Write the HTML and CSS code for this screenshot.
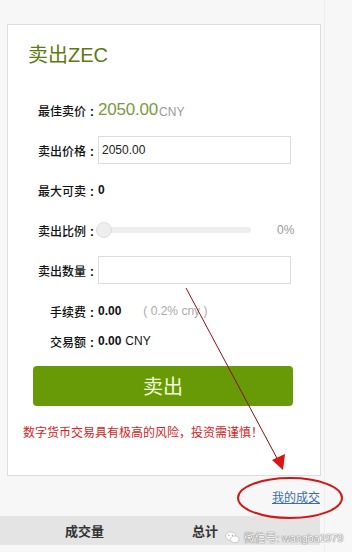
FILE: index.html
```html
<!DOCTYPE html>
<html lang="zh">
<head>
<meta charset="utf-8">
<link rel="stylesheet" href="styles.css">
</head>
<body>
<div class="page">
  <div class="card">
    <h2 class="title">卖出ZEC</h2>
    <div class="form">
      <div class="row"><span class="label">最佳卖价<span class="c">:</span></span><span class="price">2050.00</span><span class="unit">CNY</span></div>
      <div class="row"><span class="label">卖出价格<span class="c">:</span></span><div class="input">2050.00</div></div>
      <div class="row"><span class="label">最大可卖<span class="c">:</span></span><b class="num">0</b></div>
      <div class="row"><span class="label">卖出比例<span class="c">:</span></span><div class="slider"><span class="track"></span><span class="knob"></span></div><span class="pct">0%</span></div>
      <div class="row"><span class="label">卖出数量<span class="c">:</span></span><div class="input"></div></div>
      <div class="row tight"><span class="label">手续费<span class="c">:</span></span><b class="num">0.00</b><span class="note">( 0.2% cny )</span></div>
      <div class="row tight"><span class="label">交易额<span class="c">:</span></span><b class="num">0.00</b><span class="cny">CNY</span></div>
    </div>
    <button class="btn">卖出</button>
    <p class="warn">数字货币交易具有极高的风险，投资需谨慎！</p>
  </div>
  <div class="linkrow"><a class="mylink" href="#">我的成交</a></div>
  <div class="thead"><span class="th th1">成交量</span><span class="th th2">总计</span></div>
  <div class="divider"></div>
  <svg class="annot" width="352" height="552" viewBox="0 0 352 552">
    <line x1="186" y1="288" x2="279" y2="462" stroke="#8a1010" stroke-width="1"/>
    <polygon points="272,460 285,454 283,470" fill="#e01010"/>
    <ellipse cx="290" cy="498" rx="52" ry="20" fill="none" stroke="#d01818" stroke-width="2"/>
  </svg>
  <div class="wm">
    <svg class="wm-icon" width="15" height="13" viewBox="0 0 16 14"><ellipse cx="6" cy="5.5" rx="5.5" ry="4.5" fill="#fff" stroke="#bbb" stroke-width="0.8"/><ellipse cx="10.5" cy="9" rx="4.5" ry="3.6" fill="#fff" stroke="#bbb" stroke-width="0.8"/><circle cx="4" cy="4.5" r="0.8" fill="#aaa"/><circle cx="8" cy="4.5" r="0.8" fill="#aaa"/></svg>
    <span class="wm-text">微信号: wangba1979</span>
  </div>
</div>
</body>
</html>
```
FILE: styles.css
```css
* { box-sizing: border-box; }
html, body { margin: 0; padding: 0; }
body {
  background: #f7f7f7;
  font-family: "Liberation Sans", "Noto Sans CJK SC", sans-serif;
  font-size: 12px;
  color: #333;
  width: 352px;
  height: 552px;
  overflow: hidden;
}
.page { position: relative; padding-top: 24px; height: 552px; }
.divider { position: absolute; left: 324px; top: 0; width: 1px; height: 552px; background: #eeeeee; }
.card {
  margin-left: 7px;
  width: 314px;
  height: 452px;
  background: #fff;
  border: 1px solid #dddddd;
  padding-top: 18px;
}
.title {
  margin: 0 0 0 20px;
  font-size: 20px;
  line-height: 24px;
  font-weight: normal;
  color: #5d7a12;
}
.form { margin-top: 29px; display: flex; flex-direction: column; gap: 12px; }
.row { display: flex; align-items: center; height: 28px; }
.row.tight { height: 30px; margin-top: 0; }
.row.tight + .row.tight { margin-top: -12px; }
.label {
  width: 90px;
  text-align: right;
  color: #111;
  font-size: 12px;
  font-weight: 500;
}
.c { display: inline-block; width: 12px; text-align: center; font-weight: bold; font-size: 13px; }
.price { font-size: 17px; color: #7c9a3c; letter-spacing: -0.2px; }
.unit { font-size: 12px; color: #999; margin-left: 1px; margin-top: 3px; }
.input {
  width: 193px;
  height: 28px;
  border: 1px solid #dcdcdc;
  padding-left: 3px;
  line-height: 26px;
  font-size: 12px;
  color: #222;
}
.num { font-weight: bold; color: #111; }
.slider { position: relative; width: 156px; height: 16px; display: flex; align-items: center; margin-left: -2px; }
.track { display: block; width: 155px; height: 6px; border-radius: 3px; background: #eeeeee; }
.knob {
  position: absolute; left: 0; top: 0;
  width: 16px; height: 16px; border-radius: 50%;
  background: #eeeeee; border: 1px solid #dedede;
}
.pct { margin-left: 25px; color: #999; font-size: 12px; }
.note { margin-left: 22px; color: #aaa; }
.cny { margin-left: 4px; color: #111; }
.btn {
  display: block;
  margin: 10px 0 0 25px;
  width: 260px;
  height: 40px;
  border: 0;
  border-radius: 4px;
  background: #679a06;
  color: #f2ffd8;
  font-family: "Noto Sans CJK SC", sans-serif;
  font-size: 20px;
  line-height: 40px;
  padding: 0;
}
.warn {
  margin: 19px 0 0 15px;
  font-size: 12px;
  line-height: 16px;
  color: #d42424;
}
.linkrow { display: flex; justify-content: flex-end; width: 320px; margin-top: 14px; height: 16px; }
.mylink { color: #3a6ea8; text-decoration: underline; font-size: 12px; line-height: 16px; }
.thead {
  margin-top: 10px;
  width: 320px;
  height: 29px;
  background: #e4e4e4;
  display: flex;
  align-items: center;
  font-weight: bold;
  font-size: 13px;
  color: #333;
}
.th1 { margin-left: 65px; }
.th2 { margin-left: 88px; }
.annot { position: absolute; left: 0; top: 0; pointer-events: none; }
.wm { position: absolute; left: 225px; top: 529px; display: flex; align-items: center; gap: 4px; white-space: nowrap; }
.wm-text { color: #fff; font-size: 11px; letter-spacing: -0.2px; text-shadow: 0 0 1px #666, 0 0 1px #666; }
```
